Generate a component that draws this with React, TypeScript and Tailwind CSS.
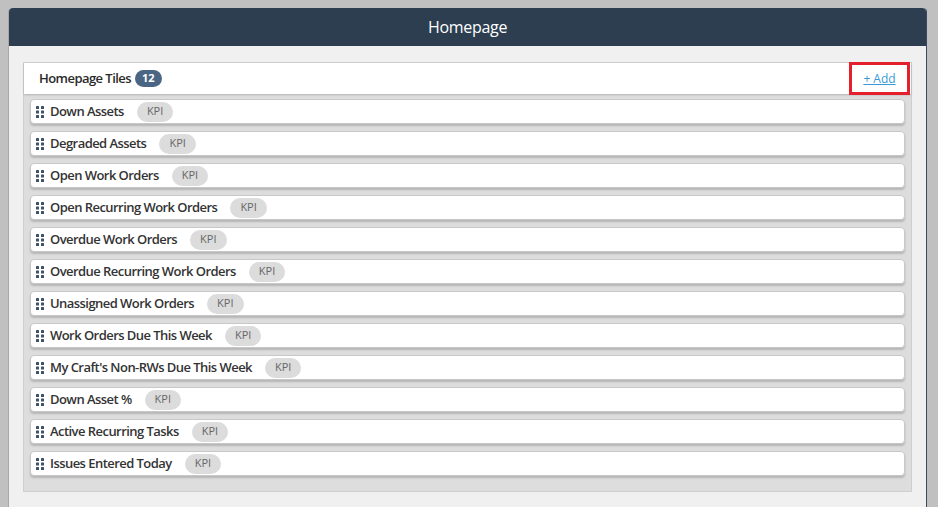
import React from 'react'

const tiles = [
  'Down Assets',
  'Degraded Assets',
  'Open Work Orders',
  'Open Recurring Work Orders',
  'Overdue Work Orders',
  'Overdue Recurring Work Orders',
  'Unassigned Work Orders',
  'Work Orders Due This Week',
  "My Craft's Non-RWs Due This Week",
  'Down Asset %',
  'Active Recurring Tasks',
  'Issues Entered Today',
]

function Grip() {
  return (
    <svg width="8" height="12" viewBox="0 0 8 12" className="shrink-0">
      {[0, 4.5, 9].map((y) => (
        <g key={y} fill="#3d5068">
          <rect x="0" y={y} width="3" height="3" rx="0.5" />
          <rect x="5" y={y} width="3" height="3" rx="0.5" />
        </g>
      ))}
    </svg>
  )
}

export default function App() {
  return (
    <div
      className="h-[507px] w-[938px] overflow-hidden bg-[#c0c0c0] pl-[8px] pr-[11px] pt-[8px]"
      style={{ fontFamily: '"Open Sans", "Liberation Sans", sans-serif' }}
    >
      <div className="h-[600px] rounded-t-[4px] border-l border-l-[#a8a8a8] border-r border-r-[#3a4a5c] bg-[#f0f0f0]">
        {/* Header */}
        <div className="flex h-[38px] items-center justify-center rounded-t-[4px] bg-[#2c3e50] text-[16px] tracking-[-0.3px] text-white">
          Homepage
        </div>

        {/* Tiles panel */}
        <div className="mx-[14px] mt-[16px] border border-[#cfcfcf] bg-[#dddddd] pb-[15px]">
          <div className="relative flex h-[31px] items-center justify-between bg-white pl-[15px] pr-[14px] shadow-[0_1px_2px_rgba(0,0,0,0.2)]">
            <div className="flex items-center gap-[4px]">
              <span className="text-[13px] font-semibold tracking-[-0.55px] text-[#2a2a2a]">Homepage Tiles</span>
              <span className="flex h-[17px] items-center rounded-full bg-[#4b6584] px-[7px] text-[11px] font-bold text-white">
                12
              </span>
            </div>
            <a
              href="#"
              className="absolute right-[1px] top-[-1px] flex h-[33px] w-[61px] items-center justify-center border-[3px] border-[#e3202b] text-[12px] text-[#3a9ad9] underline"
            >
              + Add
            </a>
          </div>

          <div className="flex flex-col gap-[7px] px-[6px] pt-[5px]">
            {tiles.map((tile) => (
              <div
                key={tile}
                className="flex h-[25px] items-center gap-[6px] rounded-[4px] border border-[#c8c8c8] bg-white pl-[5px] shadow-[0_2px_2px_rgba(0,0,0,0.18)]"
              >
                <Grip />
                <span className="text-[13px] font-semibold tracking-[-0.55px] text-[#333]">{tile}</span>
                <span className="ml-[7px] flex h-[20px] items-center rounded-full bg-[#dcdcdc] px-[10px] text-[11px] text-[#666]">
                  KPI
                </span>
              </div>
            ))}
          </div>
        </div>
      </div>
    </div>
  )
}
